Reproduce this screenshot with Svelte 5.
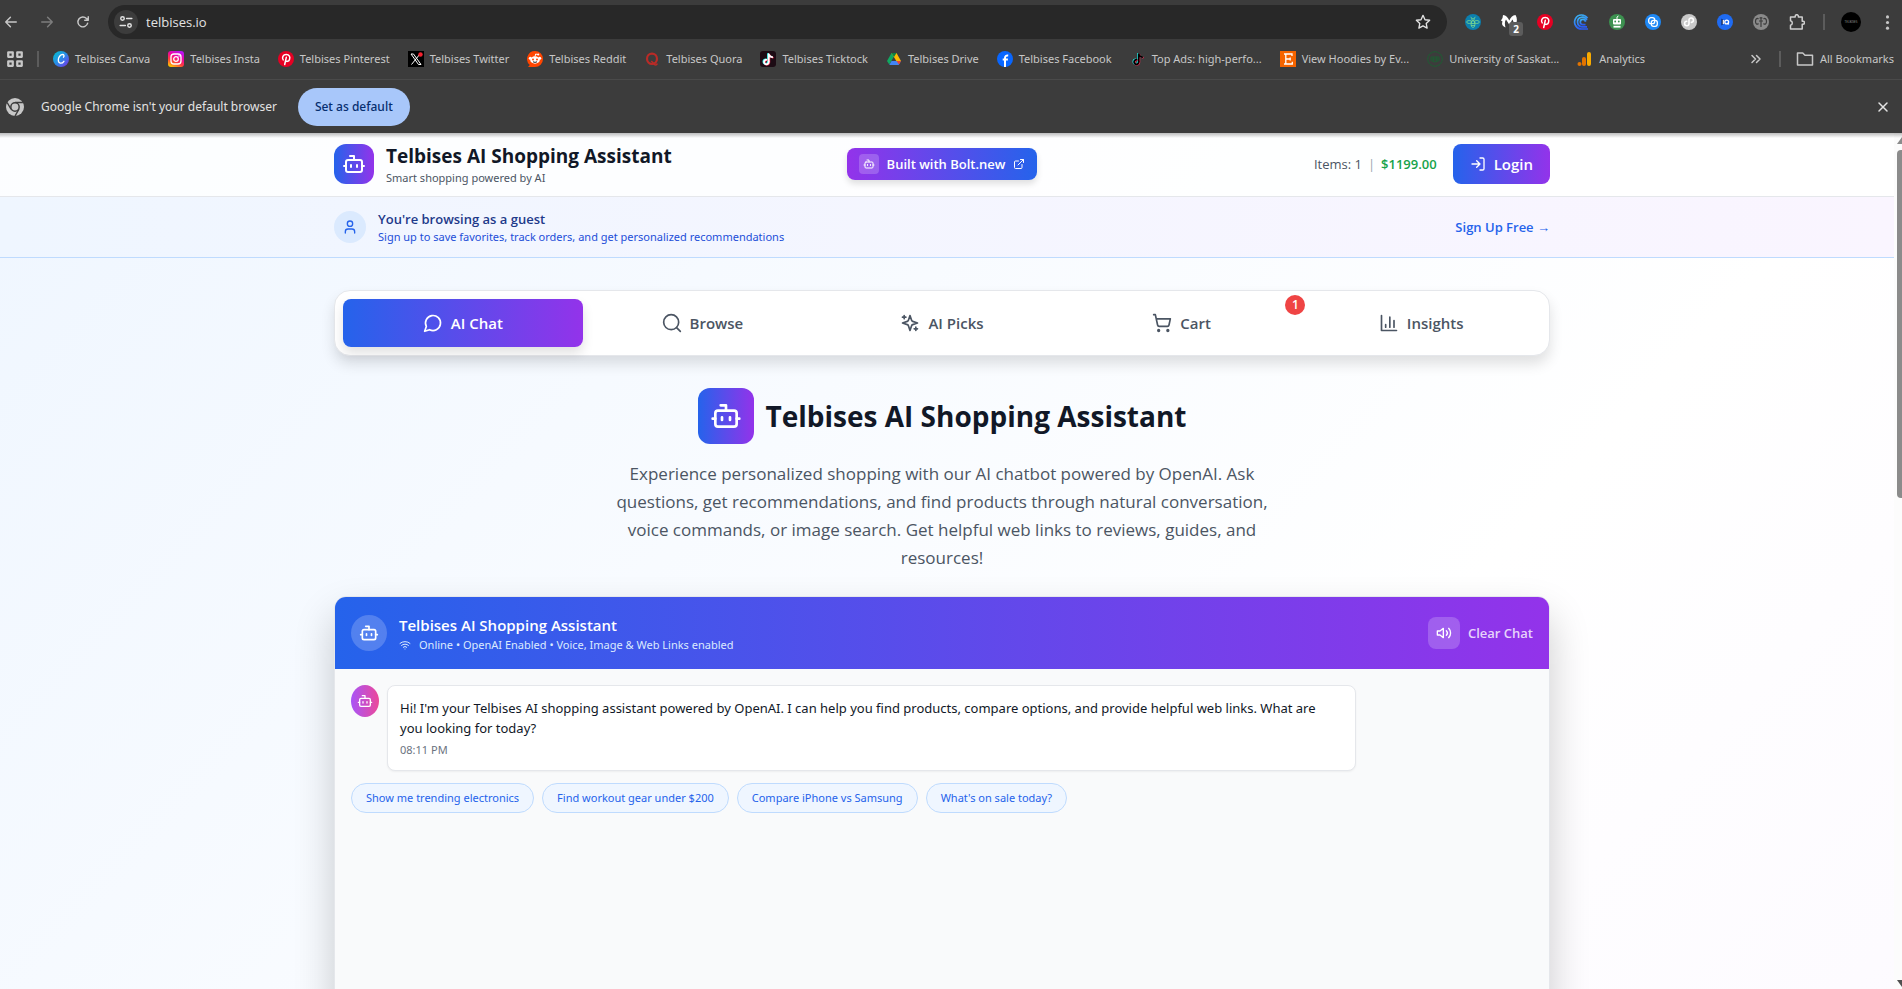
<script lang="ts">
	type Bookmark = { id: string; label: string };

	const bookmarks: Bookmark[] = [
		{ id: 'canva', label: 'Telbises Canva' },
		{ id: 'insta', label: 'Telbises Insta' },
		{ id: 'pinterest', label: 'Telbises Pinterest' },
		{ id: 'x', label: 'Telbises Twitter' },
		{ id: 'reddit', label: 'Telbises Reddit' },
		{ id: 'quora', label: 'Telbises Quora' },
		{ id: 'tiktok', label: 'Telbises Ticktock' },
		{ id: 'drive', label: 'Telbises Drive' },
		{ id: 'facebook', label: 'Telbises Facebook' },
		{ id: 'ads', label: 'Top Ads: high-perfo...' },
		{ id: 'etsy', label: 'View Hoodies by Ev...' },
		{ id: 'usask', label: 'University of Saskat...' },
		{ id: 'analytics', label: 'Analytics' }
	];

	const extensions = [
		'bee',
		'malware',
		'pinterest',
		'wave',
		'robot',
		'rings',
		'loop',
		'iq',
		'globe',
		'puzzle'
	];

	const tabs = [
		{ id: 'chat', label: 'AI Chat' },
		{ id: 'search', label: 'Browse' },
		{ id: 'sparkles', label: 'AI Picks' },
		{ id: 'cart', label: 'Cart', badge: 1 },
		{ id: 'chart', label: 'Insights' }
	];

	const suggestions = [
		'Show me trending electronics',
		'Find workout gear under $200',
		'Compare iPhone vs Samsung',
		"What's on sale today?"
	];

	let activeTab = $state('chat');
	let showInfobar = $state(true);
	let address = $state('telbises.io');
</script>

{#snippet icon(name: string, size: number)}
	<svg
		class="icon"
		width={size}
		height={size}
		viewBox="0 0 24 24"
		fill="none"
		stroke="currentColor"
		stroke-width="2"
		stroke-linecap="round"
		stroke-linejoin="round"
		aria-hidden="true"
	>
		{#if name === 'bot'}
			<path d="M12 8V4H8" />
			<rect width="16" height="12" x="4" y="8" rx="2" />
			<path d="M2 14h2M20 14h2M15 13v2M9 13v2" />
		{:else if name === 'external'}
			<path d="M15 3h6v6M10 14 21 3M18 13v6a2 2 0 0 1-2 2H5a2 2 0 0 1-2-2V8a2 2 0 0 1 2-2h6" />
		{:else if name === 'login'}
			<path d="M15 3h4a2 2 0 0 1 2 2v14a2 2 0 0 1-2 2h-4M10 17l5-5-5-5M15 12H3" />
		{:else if name === 'user'}
			<path d="M19 21v-2a4 4 0 0 0-4-4H9a4 4 0 0 0-4 4v2" />
			<circle cx="12" cy="7" r="4" />
		{:else if name === 'chat'}
			<path d="M7.9 20A9 9 0 1 0 4 16.1L2 22Z" />
		{:else if name === 'search'}
			<circle cx="11" cy="11" r="9" />
			<path d="m22 22-4.5-4.5" />
		{:else if name === 'sparkles'}
			<path
				d="m12 3-1.9 5.8a2 2 0 0 1-1.3 1.3L3 12l5.8 1.9a2 2 0 0 1 1.3 1.3L12 21l1.9-5.8a2 2 0 0 1 1.3-1.3L21 12l-5.8-1.9a2 2 0 0 1-1.3-1.3L12 3Z"
			/>
			<path d="M5 3v4M19 17v4M3 5h4M17 19h4" />
		{:else if name === 'cart'}
			<circle cx="8" cy="21" r="1" />
			<circle cx="19" cy="21" r="1" />
			<path d="M2 2h2l2.7 12.4a2 2 0 0 0 2 1.6h9.7a2 2 0 0 0 2-1.6L22 7H5.1" />
		{:else if name === 'chart'}
			<path d="M3 3v18h18M18 17V9M13 17V5M8 17v-3" />
		{:else if name === 'wifi'}
			<path d="M12 20h.01M2 8.8a15 15 0 0 1 20 0M5 12.9a10 10 0 0 1 14 0M8.5 16.4a5 5 0 0 1 7 0" />
		{:else if name === 'volume'}
			<path d="M11 5 6 9H2v6h4l5 4V5ZM15.5 8.5a5 5 0 0 1 0 7M19 5a10 10 0 0 1 0 14" />
		{:else if name === 'back'}
			<path d="M21 12H3m8-8-8 8 8 8" stroke-width="2.5" />
		{:else if name === 'forward'}
			<path d="M3 12h18m-8-8 8 8-8 8" stroke-width="2.5" />
		{:else if name === 'reload'}
			<path d="M20 14a8.5 8.5 0 1 1-2-8l3 3M21 3v6h-6" stroke-width="2.5" />
		{:else if name === 'tune'}
			<g stroke-width="2.5">
				<circle cx="6" cy="6" r="3" />
				<circle cx="18" cy="18" r="3" />
				<path d="M13 6h9M2 18h9" />
			</g>
		{:else if name === 'star'}
			<path d="m12 2 3 6.6 7 .8-5.2 4.8 1.4 7L12 17.7l-6.2 3.5 1.4-7L2 9.4l7-.8Z" />
		{:else if name === 'close'}
			<path d="M4 4l16 16M20 4 4 20" stroke-width="3" />
		{:else if name === 'more'}
			<g fill="currentColor" stroke="none">
				<circle cx="12" cy="3" r="2.5" />
				<circle cx="12" cy="12" r="2.5" />
				<circle cx="12" cy="21" r="2.5" />
			</g>
		{:else if name === 'grid'}
			<path d="M3 3h6v6H3ZM15 3h6v6h-6ZM3 15h6v6H3ZM15 15h6v6h-6Z" stroke-width="3" />
		{:else if name === 'chevrons'}
			<path d="m4 5 7 7-7 7M13 5l7 7-7 7" stroke-width="3" />
		{:else if name === 'folder'}
			<path d="M2 4h7l3 3h10v13H2Z" />
		{/if}
	</svg>
{/snippet}

{#snippet brand(name: string, size = 16)}
	<svg class="icon" width={size} height={size} viewBox="0 0 16 16" fill="none" aria-hidden="true">
		{#if name === 'canva'}
			<defs>
				<linearGradient id="canva-fill" x1="0" y1="0" x2="1" y2="1">
					<stop offset="0" stop-color="#00c4cc" />
					<stop offset="0.5" stop-color="#2a8be8" />
					<stop offset="1" stop-color="#7d2ae8" />
				</linearGradient>
			</defs>
			<circle cx="8" cy="8" r="8" fill="url(#canva-fill)" />
			<path
				d="M10.5 6.2c1-1.2.6-2.7-.9-2.7C7.4 3.5 5.3 6.3 5.3 9c0 3.6 3.5 4.3 5.6 1.3"
				stroke="#fff"
				stroke-width="1.3"
				stroke-linecap="round"
			/>
		{:else if name === 'insta'}
			<defs>
				<linearGradient id="insta-fill" x1="0.2" y1="1" x2="0.7" y2="0">
					<stop offset="0" stop-color="#ffc800" />
					<stop offset="0.35" stop-color="#ff3d3d" />
					<stop offset="0.65" stop-color="#f0059d" />
					<stop offset="1" stop-color="#b813f5" />
				</linearGradient>
			</defs>
			<rect width="16" height="16" rx="3" fill="url(#insta-fill)" />
			<rect x="3" y="3" width="10" height="10" rx="3" stroke="#fff" stroke-width="1.3" />
			<circle cx="8" cy="8" r="2.3" stroke="#fff" stroke-width="1.3" />
			<circle cx="11" cy="5" r="0.7" fill="#fff" />
		{:else if name === 'pinterest'}
			<circle cx="8" cy="8" r="8" fill="#e60023" />
			<path
				d="M5.2 8.9C3.6 6.5 5 3.5 8.2 3.5c3.2 0 4.2 2.5 3.3 4.9-.8 2.3-3.2 2.5-3.9 1.1M8.3 6.3 6.7 13.5"
				stroke="#fff"
				stroke-width="1.5"
				stroke-linecap="round"
			/>
		{:else if name === 'x'}
			<rect width="16" height="16" fill="#000" />
			<path d="M3 3h2.5l7.5 10.5h-2.5ZM12 3 3.5 13.5" stroke="#fff" stroke-width="1" />
			<circle cx="12.5" cy="3.5" r="2.2" fill="#f4212e" />
		{:else if name === 'reddit'}
			<path d="M8 0a8 8 0 1 1 0 16H1l1.8-2A8 8 0 0 1 8 0Z" fill="#ff4500" />
			<circle cx="3.3" cy="7.2" r="1.5" fill="#fff" />
			<circle cx="12.7" cy="7.2" r="1.5" fill="#fff" />
			<ellipse cx="8" cy="9" rx="4.8" ry="3.7" fill="#fff" />
			<path d="M8 5.5 8.7 3l2 .5" stroke="#fff" />
			<circle cx="11.2" cy="3.5" r="1.1" fill="#fff" />
			<circle cx="6" cy="8.5" r="1" fill="#ff4500" />
			<circle cx="10" cy="8.5" r="1" fill="#ff4500" />
			<path d="M6 10.8q2 1.2 4 0" stroke="#222" />
		{:else if name === 'quora'}
			<ellipse cx="8" cy="7.8" rx="5" ry="5.2" stroke="#b92b27" stroke-width="2.2" />
			<path d="M7 10.5c2-.5 2.5 3.5 4.5 3.5 1 0 1.5-.5 1.7-1.5" stroke="#b92b27" stroke-width="1.6" />
		{:else if name === 'tiktok' || name === 'ads'}
			{#if name === 'tiktok'}
				<rect width="16" height="16" rx="3" fill="#1c0b14" />
			{/if}
			<g stroke-width="1.8" stroke-linecap="round">
				<path d="M8 2.8v7.7a2.3 2.3 0 1 1-2.3-2.2M8 3q.8 2.4 3.5 2.8" stroke="#25f4ee" />
				<path d="M9.3 3.6v7.7A2.3 2.3 0 1 1 7 9.1M9.3 3.8q.8 2.4 3.5 2.8" stroke="#fe2c55" />
				<path
					d="M8.7 3.2v7.7a2.3 2.3 0 1 1-2.3-2.2M8.7 3.4q.8 2.4 3.5 2.8"
					stroke={name === 'ads' ? '#000' : '#fff'}
				/>
			</g>
		{:else if name === 'drive'}
			<path d="M5.5 2 1 10l2.3 3.5L8 5.5Z" fill="#11a861" />
			<path d="M5.5 2h5L15 10h-4.7Z" fill="#ffba00" />
			<path d="M5.5 2h5L8 6Z" fill="#0b8043" />
			<path d="M5.5 10H15l-2.3 4H3.3Z" fill="#4285f4" />
			<path d="M10.5 10H15l-2 3.5Z" fill="#ea4335" />
		{:else if name === 'facebook'}
			<circle cx="8" cy="8" r="8" fill="#0866ff" />
			<path d="M8 16V7q0-2.8 3.2-2.5M5.7 8.6h5.2" stroke="#fff" stroke-width="2" />
		{:else if name === 'etsy'}
			<rect width="16" height="16" fill="#f56400" />
			<path d="M12 5V3H4M5.8 3v10M4 13h8.3v-2.3M6 8h4M10.2 6.5v3" stroke="#fff" stroke-width="1.3" />
		{:else if name === 'usask'}
			<circle cx="8" cy="8" r="7.3" stroke="#1f5c33" />
			<path d="M4 6h8v3.5L8 11 4 9.5ZM4 8h8M6.5 6v4M9.5 6v4" stroke="#1f5c33" />
		{:else if name === 'analytics'}
			<rect x="10" y="1" width="4" height="14" rx="2" fill="#f9ab00" />
			<rect x="5" y="6" width="4" height="9" rx="2" fill="#e37400" />
			<circle cx="2.5" cy="13" r="2" fill="#e37400" />
		{:else if name === 'bee'}
			<circle cx="8" cy="8" r="8" fill="#0b7fae" />
			<g stroke="#7bd88f" stroke-width="0.8">
				<ellipse cx="8" cy="10" rx="2" ry="3.5" />
				<path d="M6 9.5h4M6 11.5h4M7 5 5.8 2.8M9 5l1.2-2.2" />
				<circle cx="8" cy="5.8" r="1.2" />
				<ellipse cx="4.2" cy="8" rx="2.5" ry="1.5" />
				<ellipse cx="11.8" cy="8" rx="2.5" ry="1.5" />
			</g>
		{:else if name === 'malware'}
			<path
				d="M2 1c3 .2 5 2.5 6.3 5.5C9.5 3.5 11.5 1.2 14.5 1c2.5 4 1.5 9-2 12 .8-3 .2-5.5-1.2-7.5L8.5 11 5 5.5C3.7 7.5 3.5 10 4.5 13.5 0 11 1 9 1.5 7.5L0 6.5q2-2 2-5.5Z"
				fill="#fff"
			/>
		{:else if name === 'wave'}
			<defs>
				<linearGradient id="wave-fill" x1="0" y1="0" x2="0.3" y2="1">
					<stop offset="0" stop-color="#3cb6f2" />
					<stop offset="1" stop-color="#2b5cf0" />
				</linearGradient>
			</defs>
			<g stroke="url(#wave-fill)" stroke-width="1.7">
				<path d="M14.5 4.2A7 7 0 1 0 8.5 15H15" />
				<path d="M13.8 6.2A4.8 4.8 0 1 0 9 12.8h5" />
				<path d="M12.5 7.8a2.6 2.6 0 1 0-3 2.8h3" />
			</g>
		{:else if name === 'robot'}
			<circle cx="8" cy="8" r="8" fill="#3d9150" />
			<rect x="4" y="5" width="8" height="5.5" rx="1" fill="#fff" />
			<path d="M8 5V3l1.5-1" stroke="#fff" />
			<path d="M4.5 12.7h7" stroke="#fff" stroke-width="1.8" />
			<circle cx="6.2" cy="7.5" r="0.9" fill="#3d9150" />
			<circle cx="9.8" cy="7.5" r="0.9" fill="#3d9150" />
		{:else if name === 'rings'}
			<circle cx="8" cy="8" r="8" fill="#1e88f5" />
			<rect x="3.7" y="3.7" width="6" height="6" rx="2.2" stroke="#fff" stroke-width="1.3" />
			<rect x="6.3" y="6.3" width="6" height="6" rx="2.2" stroke="#fff" stroke-width="1.3" />
		{:else if name === 'loop'}
			<circle cx="8" cy="8" r="8" fill="#c9c9c9" />
			<path
				d="M5.8 7.3a2.2 2.2 0 1 0 2.2 2.4V6a2.2 2.2 0 1 1 2.4 2.4"
				stroke="#fff"
				stroke-width="1.6"
				stroke-linecap="round"
			/>
		{:else if name === 'iq'}
			<circle cx="8" cy="8" r="8" fill="#1f6bf2" />
			<path d="M4.5 4.5v7L8 8Z" fill="#0b1b44" />
			<circle cx="9.7" cy="8" r="1.9" stroke="#fff" stroke-width="1.3" />
			<path d="M6.3 6v4M10.5 9l1.3 1.3" stroke="#fff" stroke-width="1.2" />
		{:else if name === 'globe'}
			<circle cx="8" cy="8" r="8" fill="#8a8a8a" />
			<path
				d="M8 3v10M5.5 5C4 3.5 2.5 5 2.5 7.5S4 11 5.5 9.5M10.5 5c1.5-1.5 3 0 3 2.5s-1.5 3.5-3 2M6.5 4h3M6 7h4"
				stroke="#3c3c3c"
				stroke-width="1.2"
			/>
		{:else if name === 'puzzle'}
			<path
				d="M1.5 3h4.7V2.3a1.6 1.6 0 0 1 3.2 0V3h3.8v4.3h.8a1.5 1.5 0 0 1 0 3h-.8V15H1.5v-3.7a2.3 2.3 0 0 0 0-4.5Z"
				stroke="#d0d0d0"
				stroke-width="1.5"
				stroke-linejoin="round"
			/>
		{:else if name === 'chrome'}
			<circle cx="8" cy="8" r="8" fill="#c7c7c7" />
			<path d="M8 4h7M4.5 10 1 4M11.5 10 8 16" stroke="#3c3c3c" stroke-width="1.3" />
			<circle cx="8" cy="8" r="3.7" fill="#c7c7c7" stroke="#3c3c3c" stroke-width="1.3" />
		{/if}
	</svg>
{/snippet}

<div class="window">
	<header class="browser">
		<div class="toolbar">
			<button type="button" class="tool" aria-label="Back">{@render icon('back', 14)}</button>
			<button type="button" class="tool tool--dim" aria-label="Forward">
				{@render icon('forward', 14)}
			</button>
			<button type="button" class="tool" aria-label="Reload">{@render icon('reload', 14)}</button>

			<div class="omnibox">
				<button type="button" class="site-info" aria-label="View site information">
					{@render icon('tune', 14)}
				</button>
				<input type="text" aria-label="Address" bind:value={address} />
				<button type="button" class="bookmark-star" aria-label="Bookmark this tab">
					{@render icon('star', 16)}
				</button>
			</div>

			<div class="extensions">
				{#each extensions as name}
					<button type="button" class="extension" aria-label={name}>
						{@render brand(name)}
						{#if name === 'malware'}
							<span class="extension__count">2</span>
						{/if}
					</button>
				{/each}
			</div>
			<span class="divider"></span>
			<button type="button" class="profile" aria-label="Profile">TELBISES</button>
			<button type="button" class="menu" aria-label="Menu">{@render icon('more', 15)}</button>
		</div>

		<nav class="bookmarks" aria-label="Bookmarks">
			<button type="button" class="apps" aria-label="Apps">{@render icon('grid', 18)}</button>
			<span class="divider"></span>
			<div class="bookmarks__list">
				{#each bookmarks as bookmark}
					<a href="#{bookmark.id}" class="bookmark">
						{@render brand(bookmark.id)}
						<span>{bookmark.label}</span>
					</a>
				{/each}
			</div>
			<button type="button" class="overflow" aria-label="More bookmarks">
				{@render icon('chevrons', 12)}
			</button>
			<span class="divider"></span>
			<button type="button" class="bookmark">
				{@render icon('folder', 18)}
				<span>All Bookmarks</span>
			</button>
		</nav>

		{#if showInfobar}
			<div class="infobar">
				{@render brand('chrome', 18)}
				<span>Google Chrome isn't your default browser</span>
				<button type="button" class="infobar__default">Set as default</button>
				<button
					type="button"
					class="infobar__close"
					aria-label="Close"
					onclick={() => (showInfobar = false)}
				>
					{@render icon('close', 12)}
				</button>
			</div>
		{/if}
	</header>

	<div class="viewport">
		<div class="page">
			<header class="site-header">
				<div class="container site-header__inner">
					<div class="brand">
						<span class="brand__logo">{@render icon('bot', 24)}</span>
						<div>
							<strong class="brand__name">Telbises AI Shopping Assistant</strong>
							<p class="brand__tagline">Smart shopping powered by AI</p>
						</div>
					</div>

					<a href="#bolt" class="bolt">
						<span class="bolt__icon">{@render icon('bot', 12)}</span>
						Built with Bolt.new
						{@render icon('external', 12)}
					</a>

					<div class="account">
						<p class="account__cart">
							<span>Items: 1</span>
							<span class="account__bar">|</span>
							<b>$1199.00</b>
						</p>
						<button type="button" class="login">{@render icon('login', 16)} Login</button>
					</div>
				</div>
			</header>

			<section class="guest">
				<div class="container guest__inner">
					<span class="guest__avatar">{@render icon('user', 16)}</span>
					<div>
						<p class="guest__title">You're browsing as a guest</p>
						<p class="guest__text">
							Sign up to save favorites, track orders, and get personalized recommendations
						</p>
					</div>
					<a href="#signup" class="guest__link">Sign Up Free →</a>
				</div>
			</section>

			<main>
				<div class="container">
					<nav class="tabs" aria-label="Sections">
						{#each tabs as tab}
							<button
								type="button"
								class="tab"
								class:tab--active={activeTab === tab.id}
								onclick={() => (activeTab = tab.id)}
							>
								{@render icon(tab.id, 20)}
								{tab.label}
								{#if tab.badge}
									<span class="tab__badge">{tab.badge}</span>
								{/if}
							</button>
						{/each}
					</nav>

					<section class="hero">
						<div class="hero__heading">
							<span class="hero__logo">{@render icon('bot', 32)}</span>
							<h1>Telbises AI Shopping Assistant</h1>
						</div>
						<p>
							Experience personalized shopping with our AI chatbot powered by OpenAI. Ask questions,
							get recommendations, and find products through natural conversation, voice commands,
							or image search. Get helpful web links to reviews, guides, and resources!
						</p>
					</section>

					<section class="chat">
						<header class="chat__header">
							<span class="chat__avatar">{@render icon('bot', 20)}</span>
							<div class="chat__title">
								<h2>Telbises AI Shopping Assistant</h2>
								<p>
									{@render icon('wifi', 12)}
									Online • OpenAI Enabled • Voice, Image &amp; Web Links enabled
								</p>
							</div>
							<button type="button" class="chat__sound" aria-label="Toggle voice">
								{@render icon('volume', 16)}
							</button>
							<button type="button" class="chat__clear">Clear Chat</button>
						</header>

						<div class="chat__body">
							<div class="message">
								<span class="message__avatar">{@render icon('bot', 16)}</span>
								<div class="message__bubble">
									<p>
										Hi! I'm your Telbises AI shopping assistant powered by OpenAI. I can help you
										find products, compare options, and provide helpful web links. What are you
										looking for today?
									</p>
									<time>08:11 PM</time>
								</div>
							</div>
							<div class="suggestions">
								{#each suggestions as suggestion}
									<button type="button">{suggestion}</button>
								{/each}
							</div>
						</div>
					</section>
				</div>
			</main>
		</div>

		<div class="scrollbar" aria-hidden="true">
			<span class="scrollbar__arrow scrollbar__arrow--up"></span>
			<span class="scrollbar__thumb"></span>
			<span class="scrollbar__arrow scrollbar__arrow--down"></span>
		</div>
	</div>
</div>

<style>
	:global(body) {
		margin: 0;
		overflow: hidden;
	}

	.window {
		color: #111827;
		display: flex;
		flex-direction: column;
		font-family: 'Open Sans', 'Noto Sans', sans-serif;
		font-size: 13px;
		height: 100vh;
		line-height: 20px;
	}

	.window :is(p, h1, h2) {
		margin: 0;
	}

	.browser,
	.brand__tagline,
	.guest__text,
	.chat__title p,
	.chat__body {
		font-family: 'Noto Sans', 'Open Sans', sans-serif;
	}

	button,
	input {
		background: none;
		border: none;
		color: inherit;
		font: inherit;
		padding: 0;
	}

	button {
		align-items: center;
		cursor: pointer;
		display: flex;
		justify-content: center;
	}

	a {
		color: inherit;
		text-decoration: none;
	}

	.icon {
		display: block;
		flex: none;
	}

	/* Browser */
	.browser {
		background: #3c3c3c;
		color: #c7c7c7;
		flex: none;
		font-size: 11px;
	}

	.toolbar {
		align-items: center;
		box-sizing: border-box;
		display: flex;
		height: 44px;
		padding-right: 7px;
	}

	.tool {
		height: 32px;
		margin-right: 14px;
		width: 22px;
	}

	.tool--dim {
		color: #7d7d7d;
	}

	.omnibox {
		align-items: center;
		background: #282828;
		border-radius: 17px;
		box-sizing: border-box;
		color: #e3e3e3;
		display: flex;
		flex: 1;
		gap: 8px;
		height: 34px;
		padding: 0 16px 0 6px;
	}

	.omnibox input {
		flex: 1;
		font-family: 'Open Sans', sans-serif;
		font-size: 13px;
		outline: none;
	}

	.site-info {
		background: #3c3c3c;
		border-radius: 50%;
		height: 24px;
		width: 24px;
	}

	.extensions {
		display: flex;
		gap: 20px;
		margin: 0 18px;
	}

	.extension {
		position: relative;
	}

	.extension__count {
		background: #5c5c5c;
		border-radius: 3px;
		bottom: -6px;
		color: #fff;
		font-size: 10px;
		font-weight: 700;
		line-height: 14px;
		position: absolute;
		right: -6px;
		width: 14px;
	}

	.divider {
		background: #5c5c5c;
		flex: none;
		height: 16px;
		width: 2px;
	}

	.profile {
		background: #000;
		border-radius: 50%;
		color: #8a8a8a;
		font-size: 3px;
		height: 20px;
		margin: 0 18px 0 16px;
		overflow: hidden;
		width: 20px;
	}

	.menu {
		width: 16px;
	}

	.bookmarks {
		align-items: center;
		border-bottom: 1px solid #4a4a4a;
		box-sizing: border-box;
		display: flex;
		height: 36px;
		line-height: 16px;
		padding: 0 8px 6px 6px;
	}

	.apps {
		margin-right: 13px;
	}

	.bookmarks__list {
		display: flex;
		flex: 1;
		gap: 18px;
		margin-left: 14px;
	}

	.bookmark {
		align-items: center;
		display: flex;
		gap: 6px;
		white-space: nowrap;
	}

	.overflow {
		margin-right: 17px;
	}

	.divider + .bookmark {
		margin-left: 15px;
	}

	.infobar {
		align-items: center;
		box-sizing: border-box;
		color: #e3e3e3;
		display: flex;
		font-size: 12px;
		height: 53px;
		padding: 0 13px 0 6px;
	}

	.infobar > span {
		margin: 0 21px 0 17px;
	}

	.infobar__default {
		background: #a8c7fa;
		border-radius: 19px;
		color: #062e6f;
		font-weight: 500;
		height: 38px;
		padding: 0 17px;
	}

	.infobar__close {
		margin-left: auto;
	}

	/* Page */
	.viewport {
		display: flex;
		flex: 1;
		min-height: 0;
		position: relative;
	}

	.viewport::before {
		background: linear-gradient(rgb(0 0 0 / 26%), transparent);
		content: '';
		height: 5px;
		inset: 0 0 auto;
		position: absolute;
	}

	.page {
		background: linear-gradient(to bottom right, #eff6ff, #fff, #faf5ff) 0 0 / 100% 2020px;
		flex: 1;
		overflow: hidden;
	}

	.site-header,
	.guest,
	main {
		padding-right: 10px;
	}

	.container {
		box-sizing: border-box;
		margin: 0 auto;
		max-width: 1280px;
		padding: 0 32px;
	}

	.site-header {
		background: rgb(255 255 255 / 80%);
		border-bottom: 1px solid #e5e7eb;
		padding-bottom: 1px;
	}

	.site-header__inner {
		align-items: center;
		display: grid;
		grid-template-columns: 1fr auto 1fr;
		height: 62px;
	}

	.brand {
		align-items: center;
		display: flex;
		gap: 12px;
	}

	.brand__logo,
	.hero__logo {
		background: linear-gradient(to right, #2563eb, #9333ea);
		border-radius: 12px;
		color: #fff;
		display: flex;
		flex: none;
		padding: 8px;
	}

	.brand__name {
		display: block;
		font-size: 19px;
		font-weight: 700;
		line-height: 28px;
	}

	.brand__tagline {
		color: #4b5563;
		font-size: 11px;
		line-height: 16px;
	}

	.bolt {
		align-items: center;
		background: linear-gradient(to right, #9333ea, #2563eb);
		border-radius: 8px;
		box-shadow: 0 4px 6px rgb(0 0 0 / 12%);
		color: #fff;
		display: flex;
		font-weight: 600;
		gap: 8px;
		height: 32px;
		padding: 0 12px;
	}

	.bolt__icon {
		background: rgb(255 255 255 / 20%);
		border-radius: 4px;
		padding: 4px;
	}

	.account {
		align-items: center;
		display: flex;
		gap: 16px;
		justify-content: flex-end;
	}

	.account__cart {
		color: #4b5563;
		display: flex;
		gap: 6px;
	}

	.account__bar {
		color: #9ca3af;
	}

	.account b {
		color: #16a34a;
		font-weight: 600;
	}

	.login {
		background: linear-gradient(to right, #2563eb, #9333ea);
		border-radius: 8px;
		color: #fff;
		font-size: 15px;
		font-weight: 600;
		gap: 8px;
		height: 40px;
		padding: 0 17px;
	}

	.guest {
		background: linear-gradient(to right, #eff6ff, #faf5ff);
		border-bottom: 1px solid #bfdbfe;
	}

	.guest__inner {
		align-items: center;
		display: flex;
		gap: 12px;
		height: 60px;
	}

	.guest__avatar {
		background: #dbeafe;
		border-radius: 50%;
		color: #2563eb;
		padding: 8px;
	}

	.guest__title {
		color: #1e3a8a;
		font-weight: 600;
	}

	.guest__text {
		color: #1d4ed8;
		font-size: 11px;
		line-height: 16px;
	}

	.guest__link {
		color: #2563eb;
		font-weight: 600;
		margin-left: auto;
	}

	main {
		padding-top: 32px;
	}

	.tabs {
		background: #fff;
		border: 1px solid #e5e7eb;
		border-radius: 16px;
		box-shadow: 0 8px 14px rgb(0 0 0 / 12%);
		display: flex;
		padding: 8px;
	}

	.tab {
		border-radius: 8px;
		color: #4b5563;
		flex: 1;
		font-size: 15px;
		font-weight: 600;
		gap: 8px;
		height: 48px;
		position: relative;
	}

	.tab--active {
		background: linear-gradient(to right, #2563eb, #9333ea);
		box-shadow: 0 6px 12px rgb(0 0 0 / 12%);
		color: #fff;
	}

	.tab__badge {
		background: #ef4444;
		border-radius: 50%;
		color: #fff;
		font-size: 12px;
		line-height: 20px;
		position: absolute;
		right: -4px;
		top: -4px;
		width: 20px;
	}

	.hero {
		margin: 32px auto 24px;
		max-width: 672px;
		text-align: center;
	}

	.hero__heading {
		align-items: center;
		display: flex;
		gap: 12px;
		justify-content: center;
		margin-bottom: 16px;
	}

	.hero__logo {
		padding: 12px;
	}

	.hero h1 {
		font-size: 28px;
		font-weight: 700;
		line-height: 36px;
		white-space: nowrap;
	}

	.hero p {
		color: #4b5563;
		font-size: 17px;
		line-height: 28px;
	}

	.chat {
		border: 1px solid #e5e7eb;
		border-radius: 12px;
		box-shadow: 0 20px 40px rgb(0 0 0 / 20%);
		overflow: hidden;
	}

	.chat__header {
		align-items: center;
		background: linear-gradient(to right, #2563eb, #9333ea);
		color: #fff;
		display: flex;
		height: 72px;
		padding: 0 16px;
	}

	.chat__avatar {
		background: rgb(255 255 255 / 20%);
		border-radius: 50%;
		padding: 8px;
	}

	.chat__title {
		flex: 1;
		margin-left: 12px;
	}

	.chat__title h2 {
		font-size: 15px;
		font-weight: 600;
		line-height: 24px;
	}

	.chat__title p {
		align-items: center;
		color: #dbeafe;
		display: flex;
		font-size: 11px;
		gap: 8px;
		line-height: 16px;
	}

	.chat__sound {
		background: rgb(255 255 255 / 20%);
		border-radius: 8px;
		height: 32px;
		margin-right: 8px;
		width: 32px;
	}

	.chat__clear {
		color: rgb(255 255 255 / 80%);
		font-weight: 600;
	}

	.chat__body {
		background: #f9fafb;
		height: 400px;
		padding: 16px;
	}

	.message {
		align-items: flex-start;
		display: flex;
		gap: 8px;
		max-width: 85%;
	}

	.message__avatar {
		align-items: center;
		background: linear-gradient(to right, #a855f7, #ec4899);
		border-radius: 50%;
		color: #fff;
		display: flex;
		flex: none;
		height: 32px;
		justify-content: center;
		width: 28px;
	}

	.message__bubble {
		background: #fff;
		border: 1px solid #e5e7eb;
		border-radius: 8px;
		box-shadow: 0 1px 2px rgb(0 0 0 / 5%);
		padding: 12px 24px 12px 12px;
	}

	.message__bubble time {
		color: #6b7280;
		display: block;
		font-size: 11px;
		line-height: 16px;
		margin-top: 4px;
	}

	.suggestions {
		display: flex;
		gap: 8px;
		margin-top: 12px;
	}

	.suggestions button {
		background: #eff6ff;
		border: 1px solid #bfdbfe;
		border-radius: 15px;
		color: #2563eb;
		font-size: 11px;
		height: 30px;
		padding: 0 14px;
	}

	.scrollbar {
		align-items: flex-end;
		background: #fcfcfc;
		display: flex;
		flex: none;
		flex-direction: column;
		overflow: hidden;
		width: 8px;
	}

	.scrollbar__thumb {
		background: #8b8b8b;
		border-radius: 4px 0 0 4px;
		height: 348px;
		width: 5px;
	}

	.scrollbar__arrow {
		border: 0 solid transparent;
		border-left-width: 5px;
		height: 0;
		width: 0;
	}

	.scrollbar__arrow--up {
		border-bottom: 7px solid #8b8b8b;
		margin: 4px 0 6px;
	}

	.scrollbar__arrow--down {
		border-top: 7px solid #505050;
		margin: auto 0 2px;
	}
</style>
